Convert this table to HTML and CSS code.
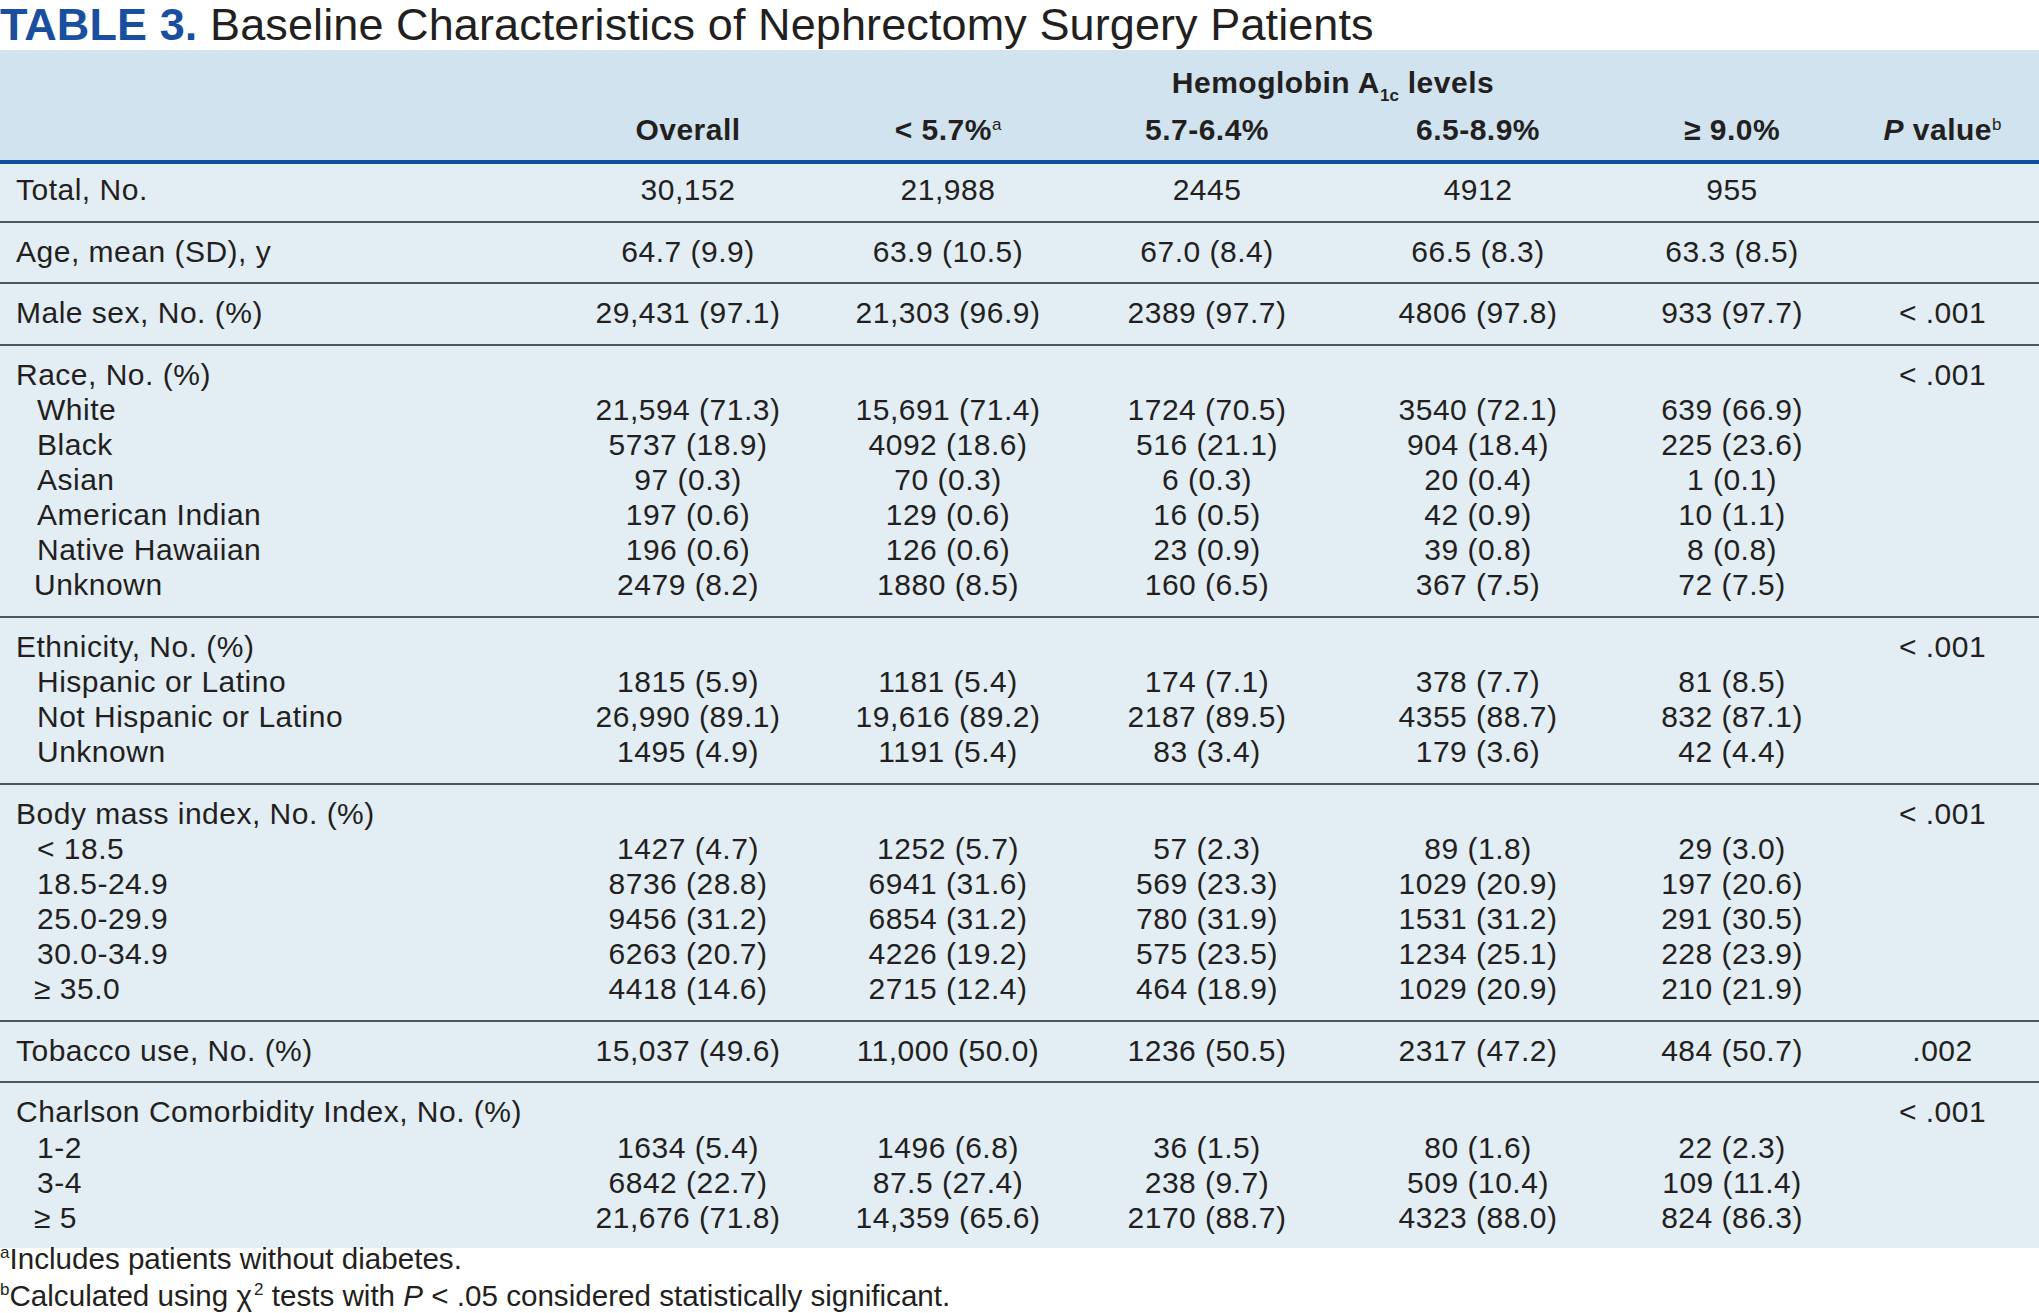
FILE: index.html
```html
<!DOCTYPE html>
<html lang="en">
<head>
  <meta charset="UTF-8" />
  <title>Table 3</title>
  <link rel="stylesheet" href="styles.css">
</head>
<body>

<h1 class="table-title"><span class="table-num">TABLE 3.</span> Baseline Characteristics of Nephrectomy Surgery Patients</h1>

<table class="data-table">
  <colgroup>
    <col class="col-label">
    <col class="col-overall">
    <col class="col-a">
    <col class="col-b">
    <col class="col-c">
    <col class="col-d">
    <col class="col-p">
  </colgroup>
  <thead>
    <tr class="head-top">
      <th></th>
      <th></th>
      <th colspan="4">Hemoglobin A<sub>1c</sub> levels</th>
      <th></th>
    </tr>
    <tr class="head-bottom">
      <th></th>
      <th>Overall</th>
      <th>&lt; 5.7%<sup>a</sup></th>
      <th>5.7-6.4%</th>
      <th>6.5-8.9%</th>
      <th>&ge; 9.0%</th>
      <th><i>P</i> value<sup>b</sup></th>
    </tr>
  </thead>

  <tbody class="first-group">
    <tr><td class="label">Total, No.</td><td>30,152</td><td>21,988</td><td>2445</td><td>4912</td><td>955</td><td></td></tr>
  </tbody>
  <tbody>
    <tr><td class="label">Age, mean (SD), y</td><td>64.7 (9.9)</td><td>63.9 (10.5)</td><td>67.0 (8.4)</td><td>66.5 (8.3)</td><td>63.3 (8.5)</td><td></td></tr>
  </tbody>
  <tbody>
    <tr><td class="label">Male sex, No. (%)</td><td>29,431 (97.1)</td><td>21,303 (96.9)</td><td>2389 (97.7)</td><td>4806 (97.8)</td><td>933 (97.7)</td><td>&lt; .001</td></tr>
  </tbody>
  <tbody>
    <tr><td class="label">Race, No. (%)</td><td></td><td></td><td></td><td></td><td></td><td>&lt; .001</td></tr>
    <tr><td class="label sub">White</td><td>21,594 (71.3)</td><td>15,691 (71.4)</td><td>1724 (70.5)</td><td>3540 (72.1)</td><td>639 (66.9)</td><td></td></tr>
    <tr><td class="label sub">Black</td><td>5737 (18.9)</td><td>4092 (18.6)</td><td>516 (21.1)</td><td>904 (18.4)</td><td>225 (23.6)</td><td></td></tr>
    <tr><td class="label sub">Asian</td><td>97 (0.3)</td><td>70 (0.3)</td><td>6 (0.3)</td><td>20 (0.4)</td><td>1 (0.1)</td><td></td></tr>
    <tr><td class="label sub">American Indian</td><td>197 (0.6)</td><td>129 (0.6)</td><td>16 (0.5)</td><td>42 (0.9)</td><td>10 (1.1)</td><td></td></tr>
    <tr><td class="label sub">Native Hawaiian</td><td>196 (0.6)</td><td>126 (0.6)</td><td>23 (0.9)</td><td>39 (0.8)</td><td>8 (0.8)</td><td></td></tr>
    <tr><td class="label sub unk">Unknown</td><td>2479 (8.2)</td><td>1880 (8.5)</td><td>160 (6.5)</td><td>367 (7.5)</td><td>72 (7.5)</td><td></td></tr>
  </tbody>
  <tbody>
    <tr><td class="label">Ethnicity, No. (%)</td><td></td><td></td><td></td><td></td><td></td><td>&lt; .001</td></tr>
    <tr><td class="label sub">Hispanic or Latino</td><td>1815 (5.9)</td><td>1181 (5.4)</td><td>174 (7.1)</td><td>378 (7.7)</td><td>81 (8.5)</td><td></td></tr>
    <tr><td class="label sub">Not Hispanic or Latino</td><td>26,990 (89.1)</td><td>19,616 (89.2)</td><td>2187 (89.5)</td><td>4355 (88.7)</td><td>832 (87.1)</td><td></td></tr>
    <tr><td class="label sub">Unknown</td><td>1495 (4.9)</td><td>1191 (5.4)</td><td>83 (3.4)</td><td>179 (3.6)</td><td>42 (4.4)</td><td></td></tr>
  </tbody>
  <tbody>
    <tr><td class="label">Body mass index, No. (%)</td><td></td><td></td><td></td><td></td><td></td><td>&lt; .001</td></tr>
    <tr><td class="label sub">&lt; 18.5</td><td>1427 (4.7)</td><td>1252 (5.7)</td><td>57 (2.3)</td><td>89 (1.8)</td><td>29 (3.0)</td><td></td></tr>
    <tr><td class="label sub">18.5-24.9</td><td>8736 (28.8)</td><td>6941 (31.6)</td><td>569 (23.3)</td><td>1029 (20.9)</td><td>197 (20.6)</td><td></td></tr>
    <tr><td class="label sub">25.0-29.9</td><td>9456 (31.2)</td><td>6854 (31.2)</td><td>780 (31.9)</td><td>1531 (31.2)</td><td>291 (30.5)</td><td></td></tr>
    <tr><td class="label sub">30.0-34.9</td><td>6263 (20.7)</td><td>4226 (19.2)</td><td>575 (23.5)</td><td>1234 (25.1)</td><td>228 (23.9)</td><td></td></tr>
    <tr><td class="label sub unk">&ge; 35.0</td><td>4418 (14.6)</td><td>2715 (12.4)</td><td>464 (18.9)</td><td>1029 (20.9)</td><td>210 (21.9)</td><td></td></tr>
  </tbody>
  <tbody>
    <tr><td class="label">Tobacco use, No. (%)</td><td>15,037 (49.6)</td><td>11,000 (50.0)</td><td>1236 (50.5)</td><td>2317 (47.2)</td><td>484 (50.7)</td><td>.002</td></tr>
  </tbody>
  <tbody class="last-group">
    <tr><td class="label">Charlson Comorbidity Index, No. (%)</td><td></td><td></td><td></td><td></td><td></td><td>&lt; .001</td></tr>
    <tr><td class="label sub">1-2</td><td>1634 (5.4)</td><td>1496 (6.8)</td><td>36 (1.5)</td><td>80 (1.6)</td><td>22 (2.3)</td><td></td></tr>
    <tr><td class="label sub">3-4</td><td>6842 (22.7)</td><td>87.5 (27.4)</td><td>238 (9.7)</td><td>509 (10.4)</td><td>109 (11.4)</td><td></td></tr>
    <tr><td class="label sub unk">&ge; 5</td><td>21,676 (71.8)</td><td>14,359 (65.6)</td><td>2170 (88.7)</td><td>4323 (88.0)</td><td>824 (86.3)</td><td></td></tr>
  </tbody>
</table>

<div class="footnotes">
  <p><sup>a</sup>Includes patients without diabetes.</p>
  <p><sup>b</sup>Calculated using &chi;<sup class="sq">2</sup> tests with <i>P</i> &lt; .05 considered statistically significant.</p>
</div>

</body>
</html>
```

FILE: styles.css
```css
body {
  font-family: "Liberation Sans", Arial, sans-serif;
  color: #231f20;
  background-color: #ffffff;
  margin: 0;
  padding: 0;
}

.table-title {
  font-size: 45px;
  font-weight: normal;
  line-height: 50px;
  height: 50px;
  margin: 0;
  padding: 0;
  white-space: nowrap;
  letter-spacing: 0.1px;
  color: #231f20;
}

.table-num {
  color: #1a4f9f;
  font-weight: bold;
}

.data-table {
  width: 100%;
  border-collapse: collapse;
  table-layout: fixed;
  font-size: 30px;
  letter-spacing: 0.5px;
}

.col-label { width: 556px; }
.col-overall { width: 264px; }
.col-a { width: 256px; }
.col-b { width: 262px; }
.col-c { width: 280px; }
.col-d { width: 228px; }
.col-p { width: 193px; }

thead {
  background-color: #d0e3ee;
}

th {
  font-weight: bold;
  text-align: center;
  line-height: 36px;
  padding: 0;
  white-space: nowrap;
}

.head-top th {
  padding-top: 15px;
}

.head-bottom th {
  padding-top: 11px;
  padding-bottom: 12px;
  border-bottom: 4px solid #0b4ea2;
}

th sub {
  font-size: 17px;
  line-height: 0;
  vertical-align: -8px;
  letter-spacing: 0;
}

th sup {
  font-size: 17px;
  font-weight: normal;
  line-height: 0;
  vertical-align: 10px;
  letter-spacing: 0;
}

tbody {
  background-color: #e3edf4;
  border-bottom: 2px solid #4f565c;
}

tbody.last-group {
  border-bottom: none;
}

td {
  padding: 0;
  line-height: 35.1px;
  text-align: center;
  white-space: nowrap;
}

tbody tr:first-child td {
  padding-top: 11px;
}

tbody.first-group tr:first-child td {
  padding-top: 8px;
}

tbody tr:last-child td {
  padding-bottom: 13.5px;
}

td.label {
  text-align: left;
  padding-left: 16px;
}

td.sub {
  padding-left: 37px;
}

td.unk {
  padding-left: 34px;
}

.footnotes {
  font-size: 29.6px;
  letter-spacing: 0;
  margin-top: -8px;
}

.footnotes p {
  margin: 0;
  line-height: 37px;
}

.footnotes sup {
  font-size: 17px;
  line-height: 0;
  vertical-align: 11px;
}

.footnotes sup.sq {
  margin-left: 2px;
}
```
